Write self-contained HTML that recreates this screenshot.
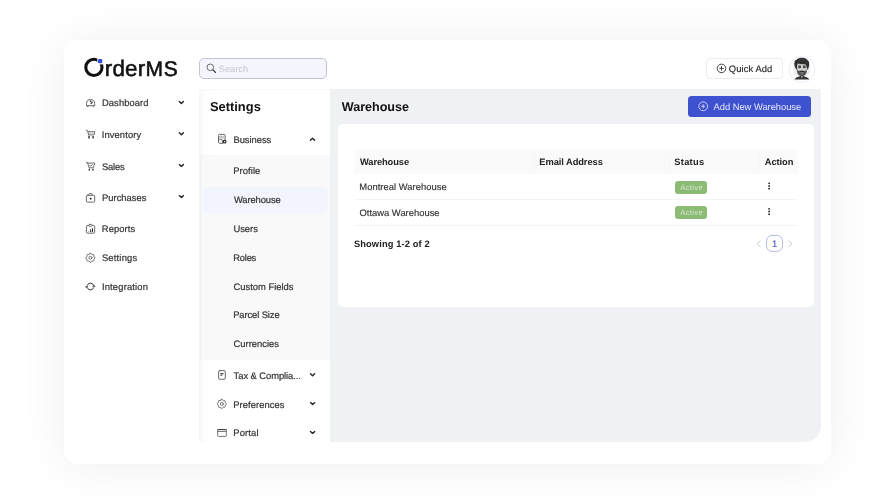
<!DOCTYPE html>
<html lang="en">
<head>
<meta charset="utf-8">
<title>OrderMS - Warehouse Settings</title>
<style>
*{box-sizing:border-box;margin:0;padding:0}
html,body{width:896px;height:504px;overflow:hidden;background:#fff}
body{font-family:"Liberation Sans",sans-serif;color:#333;position:relative;text-rendering:geometricPrecision}
#app{position:absolute;left:0;top:0;width:896px;height:504px;will-change:transform}
#app div,#app svg{position:absolute}
.card{left:64px;top:40px;width:767.2px;height:423.8px;background:#fff;border-radius:14px;box-shadow:0 2px 48px rgba(20,20,40,.068)}
.t{white-space:nowrap;line-height:20px;height:20px;font-size:9.4px}
.b{font-weight:bold}
.logo-text{left:104.7px;top:55.75px;font-size:21px;line-height:26px;height:26px;letter-spacing:.85px;color:#111;-webkit-text-stroke:.55px #111;white-space:nowrap}
.lc{font-size:22.4px;letter-spacing:.25px}
.lo{position:absolute;right:100%;top:0;margin-right:2px;color:transparent;-webkit-text-stroke:0 transparent}
.search{left:199px;top:58px;width:128px;height:21px;border:1px solid #bfc3da;border-radius:5px;background:#f4f6fd}
.qa{left:706px;top:58px;width:77px;height:20.8px;border:1px solid #ededf1;border-radius:4px;background:#fff}
.grey{left:199px;top:89px;width:622px;height:352.6px;background:#f0f1f5;border-radius:0 0 16px 0}
.panel{left:199.4px;top:88.8px;width:131px;height:352.8px;background:linear-gradient(180deg,#f7f7f8 0,#f9f9fa 1.2px,rgba(255,255,255,0) 1.6px),linear-gradient(90deg,#f6f6f7 0,#fcfcfc 4px,#fff 10px)}
.sub{left:202.3px;top:154.6px;width:128px;height:205px;background:#f9f9fa}
.strip{left:199px;top:154.6px;width:3.4px;height:205px;background:#f2f3f7}
.hl{left:203px;top:186.6px;width:125px;height:27.2px;background:#f2f5fd;border-radius:6px}
.wcard{left:338.2px;top:123.6px;width:475.8px;height:183.6px;background:#fff;border-radius:5px}
.btn{left:688.2px;top:95.6px;width:122.8px;height:21.2px;background:#3e52cf;border-radius:3.5px}
.th{left:354px;top:149px;width:444px;height:25px;background:#fafafa;border-radius:5px 5px 0 0}
.hr{left:354px;width:444px;height:1px;background:#f4f4f4}
.sep{top:153px;width:1px;height:17px;background:#f6f6f6}
.badge{left:674.9px;width:32.4px;height:13.4px;background:#8cbb76;border-radius:3.2px}
svg{overflow:visible}
.ic{fill:none;stroke:#444;stroke-width:1;stroke-linecap:round;stroke-linejoin:round}
</style>
</head>
<body>
<div id="app">
<div class="card"></div>

<header>
<!-- header: logo -->
<svg style="left:82px;top:54px" width="26" height="26" viewBox="82 54 26 26">
  <circle cx="93.9" cy="67.4" r="8.1" fill="none" stroke="#111" stroke-width="3.1"/>
  <rect x="97.3" y="57.4" width="6.6" height="7" fill="#fff"/>
  <rect x="98" y="59" width="4.3" height="4.3" rx="1.1" fill="#3450d8"/>
</svg>
<div class="logo-text" id="logo"><span class="lo">O</span><span class="lc">rder</span>MS</div>

<!-- header: search -->
<div class="search"></div>
<svg style="left:205px;top:62px" width="12" height="12" viewBox="205 62 12 12"><circle cx="210.3" cy="67.3" r="3.3" fill="none" stroke="#555" stroke-width=".85"/><path d="M212.8 69.9L215.6 72.5" stroke="#333" stroke-width="1.1" stroke-linecap="round"/></svg>
<div id="search" class="t" style="left:218.73px;top:59.01px;font-size:9.2px;color:#c5c6ce;letter-spacing:0.06px">Search</div>

<!-- header: quick add + avatar -->
<div class="qa"></div>
<svg style="left:716px;top:63px" width="11" height="11" viewBox="716 63 11 11"><circle cx="721.5" cy="68.4" r="4.25" fill="none" stroke="#222" stroke-width=".85"/><path d="M721.5 66.6v3.6M719.7 68.4h3.6" stroke="#222" stroke-width=".85" stroke-linecap="round"/></svg>
<div id="qa" class="t" style="left:728.78px;top:58.94px;font-size:9.4px;color:#222;letter-spacing:0.1px;-webkit-text-stroke:0.12px #222">Quick Add</div>
<svg style="left:788px;top:55px" width="28" height="28" viewBox="788 55 28 28">
  <circle cx="801.9" cy="69.5" r="12.9" fill="#fff" stroke="#e8edfa" stroke-width="1"/>
  <circle cx="801.9" cy="69.1" r="8.8" fill="#eeeeee"/>
  <path d="M794.6 79.4c.5-1.4 1.7-2.1 3.4-2.5l2.3-.8h3.2l2.3.8c1.7.4 2.9 1.1 3.4 2.5z" fill="#333"/>
  <path d="M800.9 76.6l1 1.3 1-1.3z" fill="#e4e4e4"/>
  <path d="M797 62.3h9.7v8.2c0 3.2-2.1 5.7-4.85 5.7s-4.85-2.5-4.85-5.7z" fill="#d2d2d2"/>
  <path d="M797.3 69.5c.4.9.9 1.4 1.5 1.6.9-.4 1.9-.6 3.1-.6s2.2.2 3.1.6c.6-.2 1.1-.7 1.5-1.6l.4 1.4c-.2 3-2.2 5.2-5 5.2s-4.8-2.2-5-5.2z" fill="#555"/>
  <path d="M799.2 71.5c.8-.6 1.7-.8 2.7-.8s1.9.2 2.7.8l-.7.5h-4z" fill="#303030"/>
  <path d="M800.7 72.6h2.4v.6h-2.4z" fill="#c4c4c4"/>
  <path d="M794.25 63.5l.3-1.6.4-1.5 1.3-.3.6-.8 1.3-.9 1.5-.3 1.5-.4 1.7.1 1.5.3 1.3.5 1.3.8 1 1 .9 1.2.3 1.6.1 1.6-.4 1.7-.4 1.5-.8 1.9-.7-1.6-.4-1.6-.5-1.5-1.1-1.3c-1.7.5-4.8.2-7.2-.4l-.6 1.7-.2 1.7.2 1.5-.1 1.7-1.2-1.3-.8-1.5-.5-1.5z" fill="#303030"/>
  <path d="M797.6 60.8c2.2-1.2 4.7-1.4 7.3-.4" stroke="#555" stroke-width=".5" fill="none"/>
  <ellipse cx="799.65" cy="67" rx="1.5" ry="1.3" fill="#3a3a3a"/>
  <ellipse cx="804.3" cy="67" rx="1.5" ry="1.3" fill="#3a3a3a"/>
  <path d="M799.3 66.9h.8M803.9 66.9h.8" stroke="#9a9a9a" stroke-width=".7"/>
  <path d="M798.3 65.3h2.6M803.1 65.3h2.6" stroke="#444" stroke-width=".6"/>
</svg>

</header>

<!-- left navigation -->
<nav>
<svg style="left:0;top:0" width="896" height="504" viewBox="0 0 896 504">
<g class="ic">
  <!-- dashboard -->
  <path d="M86.5 105.3v-1.6a4.1 4.1 0 0 1 8.2 0v1.6z" stroke="#606060" stroke-width=".95"/>
  <path d="M87.4 106.3h.7M93.1 106.3h.7" stroke="#666"/>
  <path d="M91 103.7l1.3-1.5" stroke="#222" stroke-width="1.1"/>
  <circle cx="90.4" cy="101.2" r=".35" stroke="#333"/>
  <!-- inventory -->
  <path d="M86.2 130.2l1.4.5 1.1 4.3" stroke="#606060" stroke-width=".9"/>
  <path d="M88 131.7h6.9l-.8 3.2h-5.4" stroke="#606060" stroke-width=".9"/>
  <path d="M88.5 133.3h5.8" stroke="#999" stroke-width=".6"/>
  <path d="M89 136v2.6M93.1 136v2.6" stroke="#333" stroke-width="1.4" stroke-linecap="butt"/>
  <!-- sales -->
  <path d="M86.2 162.2l1.4.5 1.4 5.1h4.3l1.5-4.7h-7.2" stroke="#606060" stroke-width=".9"/>
  <path d="M89.3 168.7v1.9M93 168.7v1.9" stroke="#333" stroke-width="1.4" stroke-linecap="butt"/>
  <path d="M89.9 165.5l.8.8 1.6-1.7" stroke="#444" stroke-width=".8"/>
  <!-- purchases -->
  <rect x="86.4" y="195.3" width="8.3" height="6.8" rx="1" stroke="#606060" stroke-width=".95"/>
  <path d="M88.9 195.3v-1a.8.8 0 0 1 .8-.8h1.7a.8.8 0 0 1 .8.8v1" stroke="#606060" stroke-width=".9"/>
  <circle cx="90.55" cy="198.7" r=".65" fill="#333" stroke="#333" stroke-width=".6"/>
  <!-- reports -->
  <rect x="86.4" y="225.5" width="8.3" height="7.7" rx="1.2" stroke="#606060" stroke-width=".95"/>
  <rect x="88.9" y="224.4" width="3.3" height="1.9" rx=".7" fill="#fff" stroke="#606060" stroke-width=".9"/>
  <path d="M88.7 231.6v-.7" stroke="#606060" stroke-width=".8" stroke-linecap="butt"/>
  <path d="M90.5 231.7v-1.9" stroke="#222" stroke-width=".9"/>
  <path d="M92.4 231.7v-3.1" stroke="#111" stroke-width="1"/>
  <!-- settings -->
  <path d="M89.95 253.27 L90.85 253.27 L91.47 254.26 L92.14 254.54 L93.29 254.28 L93.92 254.91 L93.66 256.06 L93.94 256.73 L94.93 257.35 L94.93 258.25 L93.94 258.87 L93.66 259.54 L93.92 260.69 L93.29 261.32 L92.14 261.06 L91.47 261.34 L90.85 262.33 L89.95 262.33 L89.33 261.34 L88.66 261.06 L87.51 261.32 L86.88 260.69 L87.14 259.54 L86.86 258.87 L85.87 258.25 L85.87 257.35 L86.86 256.73 L87.14 256.06 L86.88 254.91 L87.51 254.28 L88.66 254.54 L89.33 254.26Z" stroke="#606060" stroke-width=".85"/>
  <circle cx="90.4" cy="257.8" r="1.5" stroke="#606060" stroke-width=".85"/>
  <!-- integration -->
  <path d="M87.3 285.2a3.4 3.4 0 0 1 6.3 0M93.6 287.8a3.4 3.4 0 0 1-6.3 0" stroke="#333"/>
  <path d="M85.8 286.4h2l-1 1.3zM93 286.6h2l-1-1.3z" fill="#222" stroke="#222" stroke-width=".4"/>
</g>
<g fill="none" stroke="#222" stroke-width="1.35" stroke-linecap="round" stroke-linejoin="round">
  <path d="M179.3 101.5l2.1 2 2.1-2"/>
  <path d="M179.3 132.7l2.1 2 2.1-2"/>
  <path d="M179.3 164.4l2.1 2 2.1-2"/>
  <path d="M179.3 195.6l2.1 2 2.1-2"/>
</g>
</svg>
<div id="n1" class="t" style="left:101.94px;top:92.94px;font-size:9.4px;color:#333;letter-spacing:0.09px;-webkit-text-stroke:0.2px #333">Dashboard</div>
<div id="n2" class="t" style="left:101.76px;top:124.94px;font-size:9.4px;color:#333;letter-spacing:0.1px;-webkit-text-stroke:0.2px #333">Inventory</div>
<div id="n3" class="t" style="left:101.9px;top:156.94px;font-size:9.4px;color:#333;letter-spacing:-0.14px;-webkit-text-stroke:0.2px #333">Sales</div>
<div id="n4" class="t" style="left:102.04px;top:187.94px;font-size:9.4px;color:#333;letter-spacing:0.01px;-webkit-text-stroke:0.2px #333">Purchases</div>
<div id="n5" class="t" style="left:101.81px;top:218.94px;font-size:9.4px;color:#333;letter-spacing:0.09px;-webkit-text-stroke:0.2px #333">Reports</div>
<div id="n6" class="t" style="left:101.9px;top:247.94px;font-size:9.4px;color:#333;letter-spacing:0.2px;-webkit-text-stroke:0.2px #333">Settings</div>
<div id="n7" class="t" style="left:101.94px;top:276.94px;font-size:9.4px;color:#333;letter-spacing:0.17px;-webkit-text-stroke:0.2px #333">Integration</div>

</nav>

<!-- content background + settings panel -->
<div class="grey"></div>
<aside>
<div class="panel"></div>
<div class="strip"></div>
<div class="sub"></div>
<div class="hl"></div>
<div id="st" class="t b" style="left:209.89px;top:96.73px;font-size:12.9px;color:#111;letter-spacing:0.01px">Settings</div>
<div id="s0" class="t" style="left:233.41px;top:129.94px;font-size:9.4px;color:#333;letter-spacing:-0.02px;-webkit-text-stroke:0.2px #333">Business</div>
<div id="s1" class="t" style="left:233.28px;top:160.94px;font-size:9.4px;color:#333;letter-spacing:0.07px;-webkit-text-stroke:0.2px #333">Profile</div>
<div id="s2" class="t" style="left:233.9px;top:189.94px;font-size:9.4px;color:#333;letter-spacing:-0.09px;-webkit-text-stroke:0.2px #333">Warehouse</div>
<div id="s3" class="t" style="left:233.4px;top:218.94px;font-size:9.4px;color:#333;letter-spacing:-0px;-webkit-text-stroke:0.2px #333">Users</div>
<div id="s4" class="t" style="left:233.35px;top:247.94px;font-size:9.4px;color:#333;letter-spacing:-0.25px;-webkit-text-stroke:0.2px #333">Roles</div>
<div id="s5" class="t" style="left:233.48px;top:276.94px;font-size:9.4px;color:#333;letter-spacing:0.01px;-webkit-text-stroke:0.2px #333">Custom Fields</div>
<div id="s6" class="t" style="left:233.23px;top:304.94px;font-size:9.4px;color:#333;letter-spacing:-0.1px;-webkit-text-stroke:0.2px #333">Parcel Size</div>
<div id="s7" class="t" style="left:233.49px;top:333.94px;font-size:9.4px;color:#333;letter-spacing:0.02px;-webkit-text-stroke:0.2px #333">Currencies</div>
<div id="s8" class="t" style="left:233.62px;top:365.94px;font-size:9.4px;color:#333;letter-spacing:-0.06px;-webkit-text-stroke:0.2px #333">Tax &amp; Complia...</div>
<div id="s9" class="t" style="left:233.28px;top:394.94px;font-size:9.4px;color:#333;letter-spacing:0.06px;-webkit-text-stroke:0.2px #333">Preferences</div>
<div id="s10" class="t" style="left:233.35px;top:422.94px;font-size:9.4px;color:#333;letter-spacing:0.14px;-webkit-text-stroke:0.2px #333">Portal</div>

<svg style="left:0;top:0" width="896" height="504" viewBox="0 0 896 504">
<g class="ic">
  <!-- business -->
  <path d="M225.1 139.5v-4.1a1 1 0 0 0-1-1h-4.6a1 1 0 0 0-1 1v6.9a1 1 0 0 0 1 1h3.1" stroke="#606060" stroke-width=".95"/>
  <path d="M220.2 136.2h1.7v1.9h-1.7zM223.3 136.2v1.9" stroke="#888" stroke-width=".7"/>
  <path d="M218.9 139.7h3.5v3.3" stroke="#606060" stroke-width=".8"/>
  <circle cx="224.6" cy="141.7" r="1.35" stroke="#222" stroke-width="1.15"/>
  <!-- tax -->
  <rect x="218.6" y="370.6" width="6.7" height="8.7" rx="1.3" stroke="#606060" stroke-width=".95"/>
  <path d="M220.4 373.6h3.1M220.4 375.3h1.9" stroke="#444" stroke-width="1.1" stroke-linecap="butt"/>
  <!-- preferences -->
  <path d="M221.35 399.37 L222.25 399.37 L222.87 400.36 L223.54 400.64 L224.69 400.38 L225.32 401.01 L225.06 402.16 L225.34 402.83 L226.33 403.45 L226.33 404.35 L225.34 404.97 L225.06 405.64 L225.32 406.79 L224.69 407.42 L223.54 407.16 L222.87 407.44 L222.25 408.43 L221.35 408.43 L220.73 407.44 L220.06 407.16 L218.91 407.42 L218.28 406.79 L218.54 405.64 L218.26 404.97 L217.27 404.35 L217.27 403.45 L218.26 402.83 L218.54 402.16 L218.28 401.01 L218.91 400.38 L220.06 400.64 L220.73 400.36Z" stroke="#606060" stroke-width=".85"/>
  <circle cx="221.8" cy="403.9" r="1.5" stroke="#606060" stroke-width=".85"/>
  <!-- portal -->
  <rect x="217.7" y="429.5" width="8.6" height="6.9" rx=".8" stroke="#666" stroke-width=".9"/>
  <path d="M217.7 429.6h8.6" stroke="#444" stroke-width="1"/>
  <path d="M217.7 431.4h8.6" stroke="#606060" stroke-width=".9"/>
</g>
<g fill="none" stroke="#222" stroke-width="1.35" stroke-linecap="round" stroke-linejoin="round">
  <path d="M310.4 140.3l2.1-2 2.1 2"/>
  <path d="M310.5 373.7l2.1 2 2.1-2"/>
  <path d="M310.5 402.6l2.1 2 2.1-2"/>
  <path d="M310.5 431.4l2.1 2 2.1-2"/>
</g>
</svg>
</aside>

<!-- main: title + button -->
<main>
<div id="wt" class="t b" style="left:341.84px;top:96.83px;font-size:12.6px;color:#111;letter-spacing:-0.03px">Warehouse</div>
<div class="btn"></div>
<svg style="left:698px;top:101px" width="11" height="11" viewBox="698 101 11 11"><circle cx="703.2" cy="106.3" r="4.4" fill="none" stroke="#e6e9fc" stroke-width=".8"/><path d="M703.2 104.7v3.2M701.6 106.3h3.2" stroke="#e6e9fc" stroke-width=".8" stroke-linecap="round"/></svg>
<div id="btn" class="t" style="left:713.6px;top:96.94px;font-size:9.4px;color:#e6e9fc;letter-spacing:-0.04px">Add New Warehouse</div>

<!-- main: table card -->
<div class="wcard"></div>
<div class="th"></div>
<div class="sep" style="left:533.5px"></div>
<div class="sep" style="left:669px"></div>
<div class="sep" style="left:758.8px"></div>
<div class="hr" style="top:199px"></div>
<div class="hr" style="top:224.6px"></div>
<div id="h1" class="t b" style="left:359.95px;top:151.98px;font-size:9.3px;color:#222;letter-spacing:-0.08px">Warehouse</div>
<div id="h2" class="t b" style="left:539.3px;top:151.98px;font-size:9.3px;color:#222;letter-spacing:-0.06px">Email Address</div>
<div id="h3" class="t b" style="left:674.33px;top:151.98px;font-size:9.3px;color:#222;letter-spacing:0.27px">Status</div>
<div id="h4" class="t b" style="left:764.87px;top:151.98px;font-size:9.3px;color:#222;letter-spacing:-0.08px">Action</div>
<div id="r1" class="t" style="left:359.31px;top:176.94px;font-size:9.4px;color:#333;letter-spacing:0.04px;-webkit-text-stroke:0.15px #333">Montreal Warehouse</div>
<div id="r2" class="t" style="left:359.5px;top:202.94px;font-size:9.4px;color:#333;letter-spacing:0.01px;-webkit-text-stroke:0.15px #333">Ottawa Warehouse</div>
<div class="badge" style="top:180.6px"></div>
<div class="badge" style="top:205.7px"></div>
<div id="b1" class="t" style="left:680.15px;top:177.53px;font-size:7.7px;color:#d2e6c9;letter-spacing:0.34px">Active</div>
<div id="b2" class="t" style="left:680.15px;top:202.53px;font-size:7.7px;color:#d2e6c9;letter-spacing:0.34px">Active</div>
<div id="sh" class="t b" style="left:353.94px;top:233.98px;font-size:9.3px;color:#222;letter-spacing:0.12px">Showing 1-2 of 2</div>

<svg style="left:0;top:0" width="896" height="504" viewBox="0 0 896 504">
<g fill="#222">
  <circle cx="769.1" cy="183.3" r=".9"/><circle cx="769.1" cy="186" r=".9"/><circle cx="769.1" cy="188.7" r=".9"/>
  <circle cx="769.1" cy="208.8" r=".9"/><circle cx="769.1" cy="211.5" r=".9"/><circle cx="769.1" cy="214.2" r=".9"/>
</g>
<g fill="none" stroke-linecap="round" stroke-linejoin="round">
  <path d="M760.2 240.9l-3.1 2.8 3.1 2.8" stroke="#c6c6c9" stroke-width=".9"/>
  <path d="M788.9 240.9l3.1 2.8-3.1 2.8" stroke="#c6c6c9" stroke-width=".9"/>
  <rect x="766.5" y="235.4" width="16" height="16" rx="5.5" stroke="#adb4da" stroke-width=".9" fill="#fff"/>
</g>
</svg>
<div id="pg" class="t" style="left:772px;top:233.94px;font-size:9.4px;color:#5367d3;-webkit-text-stroke:0.2px #5367d3">1</div>
</main>
</div>
</body>
</html>
